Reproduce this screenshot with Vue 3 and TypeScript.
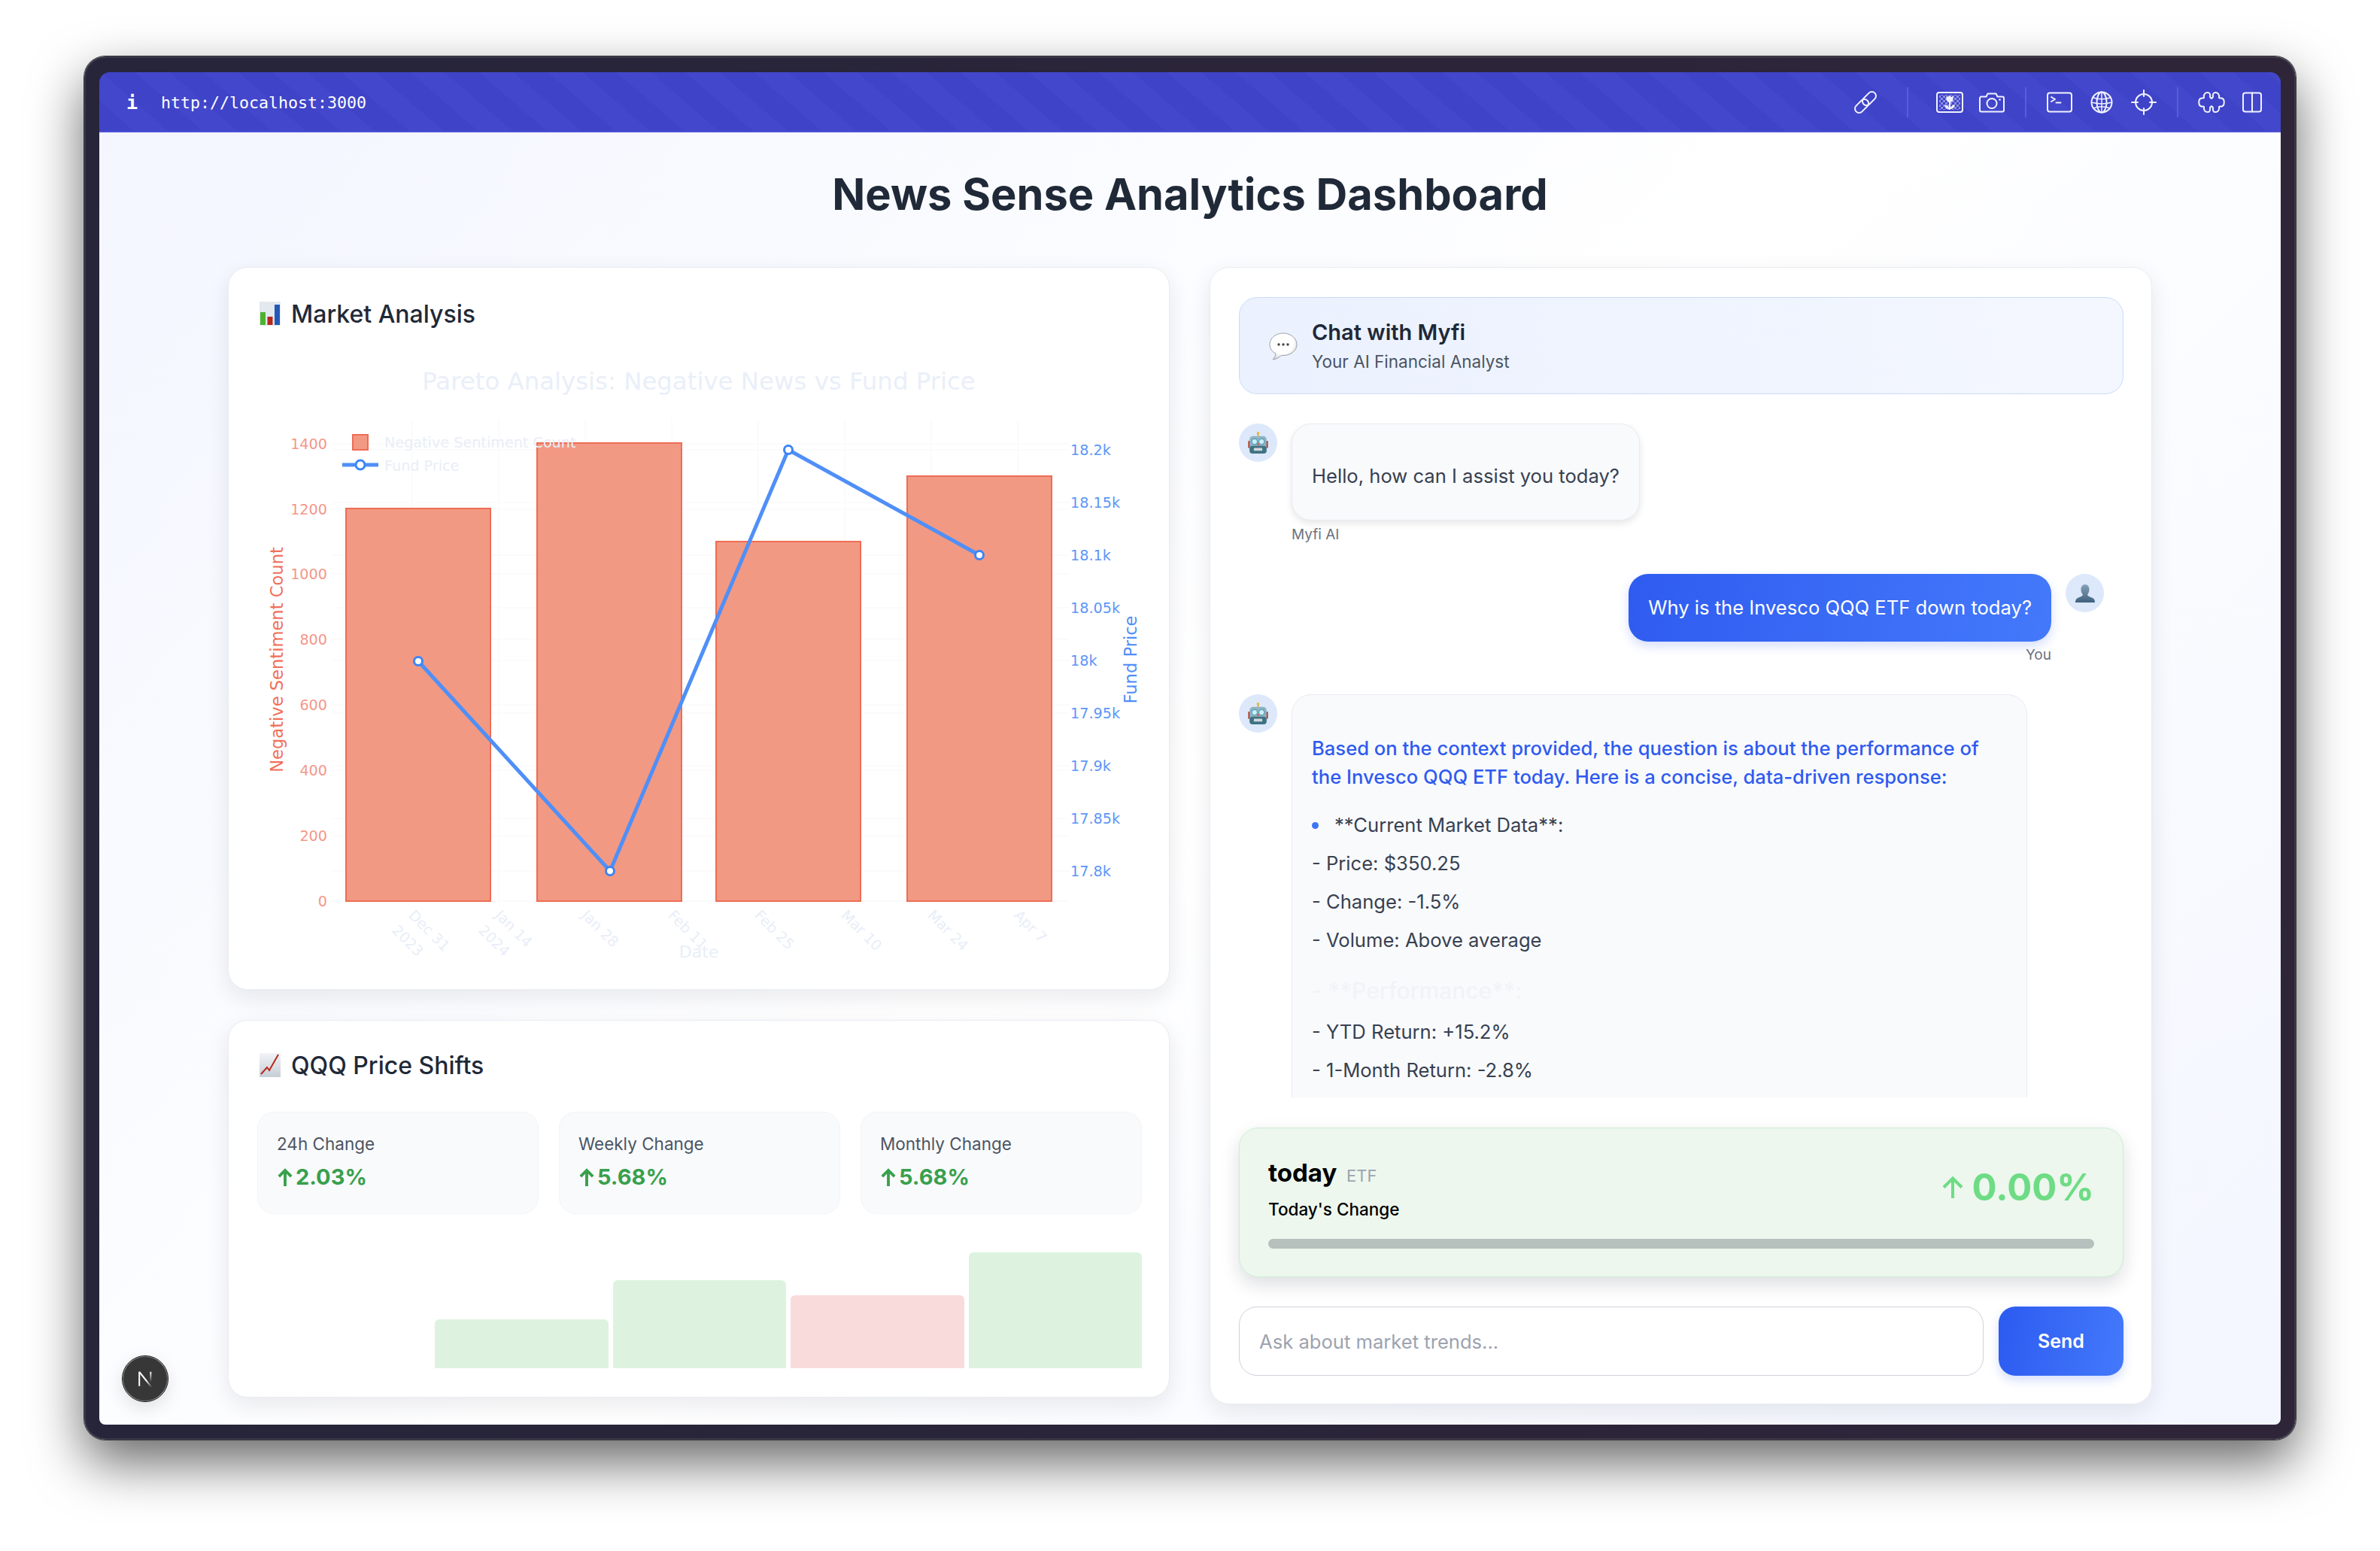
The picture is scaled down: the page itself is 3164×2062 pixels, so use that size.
<script setup lang="ts">
// chart geometry is in page pixels, the svg viewBox starts at 342,470
const redTicks = [
  { label: '1400', y: 590 },
  { label: '1200', y: 677 },
  { label: '1000', y: 763 },
  { label: '800', y: 850 },
  { label: '600', y: 937 },
  { label: '400', y: 1024 },
  { label: '200', y: 1111 },
  { label: '0', y: 1198 }
]
const blueTicks = [
  { label: '18.2k', y: 598 },
  { label: '18.15k', y: 668 },
  { label: '18.1k', y: 738 },
  { label: '18.05k', y: 808 },
  { label: '18k', y: 878 },
  { label: '17.95k', y: 948 },
  { label: '17.9k', y: 1018 },
  { label: '17.85k', y: 1088 },
  { label: '17.8k', y: 1158 }
]
const bars = [
  { x: 460, top: 676 },
  { x: 714, top: 589 },
  { x: 952, top: 720 },
  { x: 1206, top: 633 }
]
const points = [
  { x: 556, y: 879 },
  { x: 811, y: 1158 },
  { x: 1048, y: 598 },
  { x: 1302, y: 738 }
]
const linePoints = points.map(p => `${p.x},${p.y}`).join(' ')
const dates = ['Dec 31', 'Jan 14', 'Jan 28', 'Feb 11', 'Feb 25', 'Mar 10', 'Mar 24', 'Apr 7']
const gridX = [548, 663, 778, 893, 1008, 1123, 1238, 1353]

const stats = [
  { label: '24h Change', value: '2.03%' },
  { label: 'Weekly Change', value: '5.68%' },
  { label: 'Monthly Change', value: '5.68%' }
]
const shifts = [
  { height: 0, tone: 'up' },
  { height: 65, tone: 'up' },
  { height: 117, tone: 'up' },
  { height: 97, tone: 'down' },
  { height: 154, tone: 'up' }
]
</script>

<template>
  <div class="page">
    <div class="window">
      <div class="screen">
        <header class="toolbar">
          <span class="info">i</span>
          <span class="url">http://localhost:3000</span>
          <div class="tools">
            <svg class="tool" viewBox="0 0 36 36">
              <g transform="rotate(45 18 18)">
                <rect x="12.500" y="0.500" width="11" height="21" rx="5.500" />
                <rect x="12.500" y="14.500" width="11" height="21" rx="5.500" />
              </g>
            </svg>
            <i class="divider wide"></i>
            <svg class="tool" viewBox="0 0 36 36">
              <defs>
                <pattern id="checks" width="6" height="6" patternUnits="userSpaceOnUse">
                  <rect x="0" y="0" width="3" height="3" fill="#fff" fill-opacity="0.4" stroke="none" />
                  <rect x="3" y="3" width="3" height="3" fill="#fff" fill-opacity="0.4" stroke="none" />
                </pattern>
              </defs>
              <rect x="1" y="5" width="34" height="26" rx="3" />
              <rect x="4" y="8" width="28" height="20" fill="url(#checks)" stroke="none" />
              <path class="solid" d="M13.500 9.500l2.200 1.600 2.300-2 2.300 2 2.200-1.600v4.200c0 2.600-2 4.200-4.500 4.200s-4.500-1.600-4.500-4.200z" />
              <path d="M18 17v10" />
              <path class="solid" d="M17.500 27c-3.500 0-6-2-6.500-5.500 3.500 0 6 2 6.500 5.500zM18.500 27c3.500 0 6-2 6.500-5.500-3.500 0-6 2-6.500 5.500z" />
            </svg>
            <svg class="tool" viewBox="0 0 36 36">
              <path d="M4 10.500h6.500l2-4h11l2 4H32a2 2 0 0 1 2 2v16a2 2 0 0 1-2 2H4a2 2 0 0 1-2-2v-16a2 2 0 0 1 2-2z" />
              <circle cx="18" cy="19.500" r="6.500" />
              <circle class="solid" cx="28.500" cy="14.500" r="1.300" />
            </svg>
            <i class="divider"></i>
            <svg class="tool" viewBox="0 0 36 36">
              <rect x="2" y="5.500" width="32" height="25" rx="3" />
              <path d="M7 11l5 3-5 3M13.500 18.500h6" />
            </svg>
            <svg class="tool" viewBox="0 0 36 36">
              <circle cx="18" cy="18" r="13.500" />
              <ellipse cx="18" cy="18" rx="6.500" ry="13.500" />
              <path class="thin" d="M18 4.500v27M6 11.500c7 3 17 3 24 0M4.500 18c8 2.500 19 2.500 27 0M7 26c7-3 15-3 22 0" />
            </svg>
            <svg class="tool" viewBox="0 0 36 36">
              <circle cx="18" cy="18" r="11" />
              <path d="M18 2v8M18 26v8M2 18h8M26 18h8" />
            </svg>
            <i class="divider"></i>
            <svg class="tool" viewBox="0 0 36 36">
              <path d="M8 12C7 7 10 5 13 5 16 5 16.500 8 16 11L18 13 20 11C19.500 8 20 5 23 5 26 5 29 7 28 12 29 13 30 12 31 12.500 36 13 36 23 31 23.500 30 24 29 23 28 24 29 29 26 31 23 31 20 31 19.500 28 20 25L18 23 16 25C16.500 28 16 31 13 31 10 31 7 29 8 24 7 23 6 24 5 23.500 0 23 0 13 5 12.500 6 12 7 13 8 12z" />
            </svg>
            <svg class="tool" viewBox="0 0 36 36">
              <rect x="6" y="5.500" width="24" height="25" rx="3" />
              <path d="M18 5.500v25" />
            </svg>
          </div>
        </header>

        <main class="content">
          <h1 class="title">News Sense Analytics Dashboard</h1>
          <div class="columns">
            <div class="left">
              <section class="card market">
                <h2 class="card-title">
                  <svg class="emoji" viewBox="0 0 28 32">
                    <rect width="28" height="32" fill="#e3e9ee" />
                    <rect x="1" y="14" width="7" height="17" fill="#4db32f" />
                    <rect x="10.500" y="20" width="7" height="11" fill="#b5281c" />
                    <rect x="20" y="4" width="7" height="27" fill="#2459b8" />
                  </svg>
                  Market Analysis
                </h2>
                <svg class="chart" viewBox="342 470 1176 820">
                  <text class="chart-title" x="929" y="518" text-anchor="middle">Pareto Analysis: Negative News vs Fund Price</text>
                  <line v-for="x in gridX" :key="x" class="grid" :x1="x" :x2="x" y1="557" y2="1198" />
                  <line v-for="t in redTicks" :key="t.label" class="grid" x1="442" x2="1421" :y1="t.y" :y2="t.y" />
                  <line v-for="t in blueTicks" :key="t.label" class="grid" x1="442" x2="1421" :y1="t.y" :y2="t.y" />
                  <rect v-for="b in bars" :key="b.x" class="bar" :x="b.x" :y="b.top" width="192" :height="1198 - b.top" />
                  <polyline class="line" :points="linePoints" />
                  <circle v-for="p in points" :key="p.x" class="marker" :cx="p.x" :cy="p.y" r="5.500" />
                  <text v-for="t in redTicks" :key="t.label" class="tick red" x="435" :y="t.y + 7" text-anchor="end">{{ t.label }}</text>
                  <text v-for="t in blueTicks" :key="t.label" class="tick blue" x="1423" :y="t.y + 7">{{ t.label }}</text>
                  <text class="axis red-title" transform="translate(376 877) rotate(-90)" text-anchor="middle">Negative Sentiment Count</text>
                  <text class="axis blue-title" transform="translate(1511 877) rotate(-90)" text-anchor="middle">Fund Price</text>
                  <rect class="bar" x="469" y="578" width="20" height="20" />
                  <line class="line" x1="455" x2="503" y1="618" y2="618" />
                  <circle class="marker" cx="479" cy="618" r="6" />
                  <text class="legend" x="511" y="595">Negative Sentiment Count</text>
                  <text class="legend" x="511" y="626">Fund Price</text>
                  <text
                    v-for="(d, i) in dates"
                    :key="d"
                    class="date"
                    :transform="`translate(${542 + i * 115} 1218) rotate(45)`"
                  >{{ d }}</text>
                  <text class="date" transform="translate(520 1238) rotate(45)">2023</text>
                  <text class="date" transform="translate(635 1238) rotate(45)">2024</text>
                  <text class="date-title" x="929" y="1273" text-anchor="middle">Date</text>
                </svg>
              </section>

              <section class="card shifts">
                <h2 class="card-title">
                  <svg class="emoji" viewBox="0 0 28 32">
                    <defs>
                      <linearGradient id="sheet" x1="0" y1="0" x2="0" y2="1">
                        <stop offset="0" stop-color="#f2f4f6" />
                        <stop offset="1" stop-color="#c6ced6" />
                      </linearGradient>
                    </defs>
                    <rect width="28" height="32" fill="url(#sheet)" />
                    <path d="M2 28l8-9 3 4 12-21" fill="none" stroke="#b9261c" stroke-width="2" />
                  </svg>
                  QQQ Price Shifts
                </h2>
                <div class="stats">
                  <div v-for="s in stats" :key="s.label" class="stat">
                    <div class="stat-label">{{ s.label }}</div>
                    <div class="stat-value">
                      <svg class="stat-arrow" viewBox="0 0 22 26">
                        <path d="M11 25V3M2.500 11.500L11 3l8.500 8.500" />
                      </svg>
                      {{ s.value }}
                    </div>
                  </div>
                </div>
                <div class="shift-bars">
                  <div
                    v-for="(b, i) in shifts"
                    :key="i"
                    class="shift-bar"
                    :class="b.tone"
                    :style="{ height: b.height + 'px' }"
                  ></div>
                </div>
              </section>
            </div>

            <section class="card chat">
              <div class="chat-head">
                <svg class="balloon" viewBox="0 0 38 37">
                  <defs>
                    <radialGradient id="puff" cx="0.45" cy="0.35" r="0.7">
                      <stop offset="0.6" stop-color="#ffffff" />
                      <stop offset="1" stop-color="#c9cbd0" />
                    </radialGradient>
                  </defs>
                  <path d="M19 1C9 1 1 7.500 1 16c0 5.500 3 9.500 8 12-.5 3-2 6-4 8 5-.5 9-3 11.500-5.500.8.100 1.700.100 2.500.100 10 0 18-6.500 18-14.600S29 1 19 1z" fill="url(#puff)" stroke="#9fa2a8" stroke-width="1" />
                  <circle cx="13" cy="16" r="1.700" fill="#444" />
                  <circle cx="19" cy="16" r="1.700" fill="#444" />
                  <circle cx="25" cy="16" r="1.700" fill="#444" />
                </svg>
                <div class="chat-text">
                  <div class="chat-title">Chat with Myfi</div>
                  <div class="chat-sub">Your AI Financial Analyst</div>
                </div>
              </div>

              <div class="messages">
                <div class="row">
                  <div class="avatar">
                    <svg class="robot" viewBox="0 0 28 32">
                      <rect x="13" y="1" width="2" height="5" fill="#d9a441" />
                      <circle cx="14" cy="2" r="2" fill="#e8b93f" />
                      <rect x="0" y="13" width="3" height="10" fill="#b23b30" />
                      <rect x="25" y="13" width="3" height="10" fill="#b23b30" />
                      <rect x="2" y="6" width="24" height="25" rx="5" fill="#8fb3c0" />
                      <rect x="2" y="20" width="24" height="11" rx="4" fill="#3f7283" />
                      <circle cx="9" cy="14" r="4" fill="#c9f0fa" stroke="#3a8fb0" />
                      <circle cx="19" cy="14" r="4" fill="#c9f0fa" stroke="#3a8fb0" />
                      <path d="M14 15l-2 4h4z" fill="#d9534f" />
                      <rect x="8" y="23" width="12" height="4" rx="1" fill="#cfd8dc" />
                    </svg>
                  </div>
                  <div class="msg">
                    <div class="bubble">
                      <p class="msg-line">Hello, how can I assist you today?</p>
                    </div>
                    <div class="meta">Myfi AI</div>
                  </div>
                </div>

                <div class="row mine">
                  <div class="msg">
                    <div class="bubble user">Why is the Invesco QQQ ETF down today?</div>
                    <div class="meta">You</div>
                  </div>
                  <div class="avatar">
                    <svg class="bust" viewBox="0 0 26 24">
                      <defs>
                        <linearGradient id="bust" x1="0" y1="0" x2="0" y2="1">
                          <stop offset="0" stop-color="#86a2b8" />
                          <stop offset="1" stop-color="#41607f" />
                        </linearGradient>
                      </defs>
                      <path d="M13 0c3.500 0 5.500 3 5.500 6.500 0 3-1 5.500-2.500 7 0 2 4 3 7 4.500 2 1 3 3 3 6H0c0-3 1-5 3-6 3-1.500 7-2.500 7-4.500-1.500-1.500-2.500-4-2.500-7C7.500 3 9.500 0 13 0z" fill="url(#bust)" />
                    </svg>
                  </div>
                </div>

                <div class="row">
                  <div class="avatar">
                    <svg class="robot" viewBox="0 0 28 32">
                      <rect x="13" y="1" width="2" height="5" fill="#d9a441" />
                      <circle cx="14" cy="2" r="2" fill="#e8b93f" />
                      <rect x="0" y="13" width="3" height="10" fill="#b23b30" />
                      <rect x="25" y="13" width="3" height="10" fill="#b23b30" />
                      <rect x="2" y="6" width="24" height="25" rx="5" fill="#8fb3c0" />
                      <rect x="2" y="20" width="24" height="11" rx="4" fill="#3f7283" />
                      <circle cx="9" cy="14" r="4" fill="#c9f0fa" stroke="#3a8fb0" />
                      <circle cx="19" cy="14" r="4" fill="#c9f0fa" stroke="#3a8fb0" />
                      <path d="M14 15l-2 4h4z" fill="#d9534f" />
                      <rect x="8" y="23" width="12" height="4" rx="1" fill="#cfd8dc" />
                    </svg>
                  </div>
                  <div class="bubble answer">
                    <p class="lead">Based on the context provided, the question is about the performance of the Invesco QQQ ETF today. Here is a concise, data-driven response:</p>
                    <p class="point"><i class="dot"></i>**Current Market Data**:</p>
                    <p class="item">- Price: $350.25</p>
                    <p class="item">- Change: -1.5%</p>
                    <p class="item">- Volume: Above average</p>
                    <p class="item faint">- **Performance**:</p>
                    <p class="item">- YTD Return: +15.2%</p>
                    <p class="item">- 1-Month Return: -2.8%</p>
                  </div>
                </div>
              </div>

              <div class="ticker">
                <div class="ticker-top">
                  <div>
                    <div class="ticker-name">today <span class="ticker-type">ETF</span></div>
                    <div class="ticker-sub">Today's Change</div>
                  </div>
                  <div class="ticker-change">
                    <svg class="ticker-arrow" viewBox="0 0 28 30">
                      <path d="M14 29V2.500M2 14.500l12-12 12 12" />
                    </svg>
                    0.00%
                  </div>
                </div>
                <div class="progress"></div>
              </div>

              <form class="ask" @submit.prevent>
                <input class="ask-input" type="text" placeholder="Ask about market trends..." />
                <button class="send" type="submit">Send</button>
              </form>
            </section>
          </div>

          <div class="next-badge">
            <svg viewBox="0 0 24 24" width="22" height="22">
              <defs>
                <linearGradient id="nDiag" gradientUnits="userSpaceOnUse" x1="3" y1="2" x2="22" y2="24">
                  <stop offset="0.55" stop-color="#fff" />
                  <stop offset="1" stop-color="#fff" stop-opacity="0" />
                </linearGradient>
                <linearGradient id="nSide" gradientUnits="userSpaceOnUse" x1="0" y1="2" x2="0" y2="17">
                  <stop offset="0" stop-color="#fff" />
                  <stop offset="1" stop-color="#fff" stop-opacity="0" />
                </linearGradient>
              </defs>
              <path d="M3.500 22.500V2" stroke="#fff" stroke-width="2.200" fill="none" />
              <path d="M3.500 2L21 24" stroke="url(#nDiag)" stroke-width="2.200" fill="none" />
              <path d="M20 2v15" stroke="url(#nSide)" stroke-width="2.200" fill="none" />
            </svg>
          </div>
        </main>
      </div>
    </div>
  </div>
</template>

<style>
html,
body {
  margin: 0;
  background: #fff;
}
</style>

<style scoped>
.page {
  width: 3164px;
  height: 2062px;
  padding: 75px 112px 148px;
  box-sizing: border-box;
  overflow: hidden;
  font-family: Inter, "Liberation Sans", sans-serif;
  background: #fff;
}

.window {
  height: 100%;
  box-sizing: border-box;
  padding: 21px 20px 20px;
  border-radius: 28px;
  background: linear-gradient(90deg, #26253a, #2f2539);
  box-shadow: inset 0 0 0 2px rgba(255, 255, 255, 0.08), 0 0 0 1px #3a3a3a, 0 30px 70px rgba(0, 0, 0, 0.6);
}

.screen {
  height: 100%;
  display: flex;
  flex-direction: column;
  overflow: hidden;
  border-radius: 14px 14px 8px 8px;
}

.toolbar {
  height: 80px;
  flex: none;
  box-sizing: border-box;
  display: flex;
  align-items: center;
  padding: 2px 8px 0 36px;
  color: #fff;
  border-bottom: 2px solid #4c50d4;
  background: repeating-linear-gradient(41deg, #3f43c8 0 30px, #4347cb 30px 60px);
}

.info {
  width: 46px;
  font: 700 25px "DejaVu Sans Mono", monospace;
}

.url {
  font: 400 21.600px "DejaVu Sans Mono", monospace;
}

.tools {
  margin-left: auto;
  display: flex;
  align-items: center;
}

.tool {
  width: 36px;
  height: 36px;
  padding: 0 10px;
  overflow: visible;
  fill: none;
  stroke: #f0f2ff;
  stroke-width: 2;
  stroke-linejoin: round;
  stroke-linecap: round;
}

.tool:last-child {
  margin: 0 2px 0 -2px;
}

.tool .solid {
  fill: #f0f2ff;
  stroke: none;
}

.tool .thin {
  stroke-width: 1.500;
}

.divider {
  width: 2px;
  height: 40px;
  margin: 0 16px;
  background: #5a5ed6;
}

.divider.wide {
  margin: 0 27px;
}

.content {
  position: relative;
  flex: 1;
  min-height: 0;
  padding: 0 171px;
  background: linear-gradient(135deg, #f3f6ff 0%, #fff 50%, #f3f6ff 100%);
}

.title {
  height: 179px;
  margin: 0;
  padding-top: 50px;
  box-sizing: border-box;
  text-align: center;
  font-size: 57.800px;
  line-height: 64px;
  font-weight: 700;
  color: #1f2937;
}

.columns {
  display: grid;
  grid-template-columns: 1252px 1253px;
  column-gap: 53px;
  align-items: start;
}

.left {
  display: flex;
  flex-direction: column;
  gap: 40px;
}

.card {
  box-sizing: border-box;
  background: #fff;
  border: 1px solid #e9ecf2;
  border-radius: 26px;
  box-shadow: 0 10px 30px rgba(17, 24, 39, 0.09);
}

.card-title {
  margin: 0;
  height: 40px;
  padding-left: 3px;
  display: flex;
  align-items: center;
  gap: 14px;
  font-size: 32px;
  font-weight: 500;
  color: #1f2937;
}

.emoji {
  width: 28px;
  height: 32px;
  flex: none;
}

.market {
  height: 961px;
  padding: 41px 36px 0 38px;
}

.chart {
  display: block;
  width: 1176px;
  height: 820px;
  margin-top: 33px;
}

.chart text {
  font-family: "DejaVu Sans", Verdana, sans-serif;
}

.grid {
  stroke: #fafbfd;
  stroke-width: 2;
}

.bar {
  fill: #f29983;
  stroke: #ee6d55;
  stroke-width: 2;
}

.line {
  fill: none;
  stroke: #4f8ff7;
  stroke-width: 5;
}

.marker {
  fill: #fff;
  stroke: #3d84f5;
  stroke-width: 3;
}

.chart-title {
  font-size: 32.400px;
  fill: #e9eff9;
}

.tick {
  font-size: 19.200px;
}

.tick.red {
  fill: #f4978a;
}

.tick.blue {
  fill: #5b96f7;
}

.axis {
  font-size: 22.600px;
}

.red-title {
  fill: #f0705a;
}

.blue-title {
  fill: #4f8ef7;
}

.legend {
  font-size: 19.200px;
  fill: #e8eef8;
}

.date {
  font-size: 19.200px;
  fill: #e8eef8;
}

.date-title {
  font-size: 22px;
  fill: #e8eef8;
}

.shifts {
  height: 502px;
  padding: 39px 36px 0 38px;
}

.stats {
  display: grid;
  grid-template-columns: repeat(3, 1fr);
  gap: 27px;
  margin-top: 42px;
}

.stat {
  height: 136px;
  box-sizing: border-box;
  padding: 24px 25px 0;
  background: #f9fafc;
  border: 1px solid #f2f4f7;
  border-radius: 22px;
}

.stat-label {
  font-size: 22.500px;
  line-height: 36px;
  color: #4b5563;
}

.stat-value {
  display: flex;
  align-items: center;
  gap: 3px;
  margin-top: 8px;
  font-size: 29px;
  line-height: 36px;
  font-weight: 700;
  color: #38a04d;
}

.stat-arrow {
  width: 22px;
  height: 25px;
  fill: none;
  stroke: #38a04d;
  stroke-width: 4;
}

.shift-bars {
  height: 154px;
  margin-top: 51px;
  display: grid;
  grid-template-columns: repeat(5, 1fr);
  gap: 6px;
  align-items: end;
}

.shift-bar {
  border-radius: 6px 6px 0 0;
}

.shift-bar.up {
  background: #ddf3df;
}

.shift-bar.down {
  background: #f9dbdb;
}

.chat {
  height: 1512px;
  padding: 39px 37px 0 38px;
  display: flex;
  flex-direction: column;
}

.chat-head {
  height: 129px;
  flex: none;
  box-sizing: border-box;
  display: flex;
  align-items: center;
  gap: 19px;
  padding: 0 39px;
  border: 1px solid #c9dcf8;
  border-radius: 24px;
  background: linear-gradient(90deg, #ebf1fe, #f4f7ff);
}

.balloon {
  width: 38px;
  height: 37px;
  flex: none;
  margin-top: 2px;
}

.chat-text {
  padding-top: 2px;
}

.chat-title {
  font-size: 29px;
  line-height: 38px;
  font-weight: 600;
  color: #1f2937;
}

.chat-sub {
  margin-top: 3px;
  font-size: 22.500px;
  line-height: 34px;
  color: #4b5563;
}

.messages {
  height: 896px;
  flex: none;
  margin-top: 39px;
  overflow: hidden;
  display: flex;
  flex-direction: column;
  gap: 40px;
}

.row {
  flex: none;
  display: flex;
  gap: 19px;
  align-items: flex-start;
}

.row.mine {
  justify-content: flex-end;
  padding-right: 26px;
}

.row.mine .msg {
  display: flex;
  flex-direction: column;
  align-items: flex-end;
}

.row.mine .meta {
  margin-top: 6px;
}

.avatar {
  width: 51px;
  height: 51px;
  flex: none;
  display: flex;
  align-items: center;
  justify-content: center;
  border-radius: 50%;
  background: #dde8fb;
}

.robot {
  width: 27px;
  height: 30px;
}

.bust {
  width: 26px;
  height: 24px;
}

.bubble {
  box-sizing: border-box;
  border: 1px solid #e9ebf0;
  border-radius: 26px;
  background: #f9fafc;
  box-shadow: 0 4px 10px rgba(17, 24, 39, 0.1);
  font-size: 25.600px;
  line-height: 38px;
  color: #374151;
}

.msg-line {
  margin: 0;
  padding: 50px 26px 39px;
}

.bubble.user {
  padding: 26px 26px;
  border: none;
  color: #fff;
  background: linear-gradient(100deg, #2f5cf0, #4479fb);
  box-shadow: 0 6px 14px rgba(47, 92, 240, 0.2);
}

.meta {
  margin-top: 7px;
  font-size: 19px;
  line-height: 24px;
  color: #6b7280;
}

/* runs past the bottom of the message list, the list clips it */
.bubble.answer {
  width: 978px;
  min-height: 640px;
  flex: none;
  padding: 52px 26px 0;
  box-shadow: none;
}

.answer p {
  margin: 0;
}

.lead {
  font-weight: 500;
  color: #2f5bf0;
}

.answer .point {
  display: flex;
  align-items: center;
  margin-top: 26px;
}

.dot {
  width: 9px;
  height: 9px;
  margin: 0 21px 0 0;
  border-radius: 50%;
  background: #3d73f5;
}

.answer .item {
  margin-top: 13px;
}

.answer .item.faint {
  margin-top: 29px;
  font-size: 30px;
  font-weight: 500;
  color: #f2f3f7;
}

.answer .faint + .item {
  margin-top: 17px;
}

.ticker {
  height: 199px;
  flex: none;
  box-sizing: border-box;
  margin-top: 40px;
  padding: 38px 38px 0;
  border: 1px solid #cdeed2;
  border-radius: 26px;
  background: #edf7ee;
  box-shadow: 0 10px 24px rgba(17, 24, 39, 0.14);
}

.ticker-top {
  display: flex;
  justify-content: space-between;
  align-items: center;
  height: 86px;
}

.ticker-name {
  font-size: 33px;
  line-height: 44px;
  font-weight: 700;
  color: #000;
}

.ticker-type {
  margin-left: 5px;
  font-size: 22px;
  font-weight: 400;
  color: #9ca3af;
}

.ticker-sub {
  margin-top: 6px;
  font-size: 22.500px;
  line-height: 34px;
  font-weight: 500;
  color: #000;
}

.ticker-change {
  display: flex;
  align-items: center;
  gap: 12px;
  margin-top: -4px;
  font-size: 49px;
  line-height: 60px;
  font-weight: 700;
  color: #6edc85;
}

.ticker-arrow {
  width: 28px;
  height: 30px;
  fill: none;
  stroke: #6edc85;
  stroke-width: 4;
}

.progress {
  height: 13px;
  margin-top: 23px;
  border-radius: 7px;
  background: #b6c0bd;
}

.ask {
  display: flex;
  gap: 20px;
  margin-top: 39px;
}

.ask-input {
  flex: 1;
  min-width: 0;
  height: 92px;
  box-sizing: border-box;
  padding: 0 26px;
  border: 1px solid #d1d2db;
  border-radius: 24px;
  background: #fff;
  font: 400 25.600px Inter, sans-serif;
}

.ask-input::placeholder {
  color: #9ca3af;
}

.send {
  width: 166px;
  height: 92px;
  flex: none;
  border: none;
  border-radius: 22px;
  color: #fff;
  font: 600 25px Inter, sans-serif;
  background: linear-gradient(100deg, #2c5bf0, #4479fb);
  box-shadow: 0 6px 14px rgba(47, 92, 240, 0.2);
}

.next-badge {
  position: absolute;
  left: 31px;
  bottom: 31px;
  width: 60px;
  height: 60px;
  box-sizing: border-box;
  display: flex;
  align-items: center;
  justify-content: center;
  border-radius: 50%;
  border: 1px solid #777;
  outline: 1px solid #111;
  background: #373737;
  box-shadow: 0 8px 24px rgba(0, 0, 0, 0.12);
}
</style>
